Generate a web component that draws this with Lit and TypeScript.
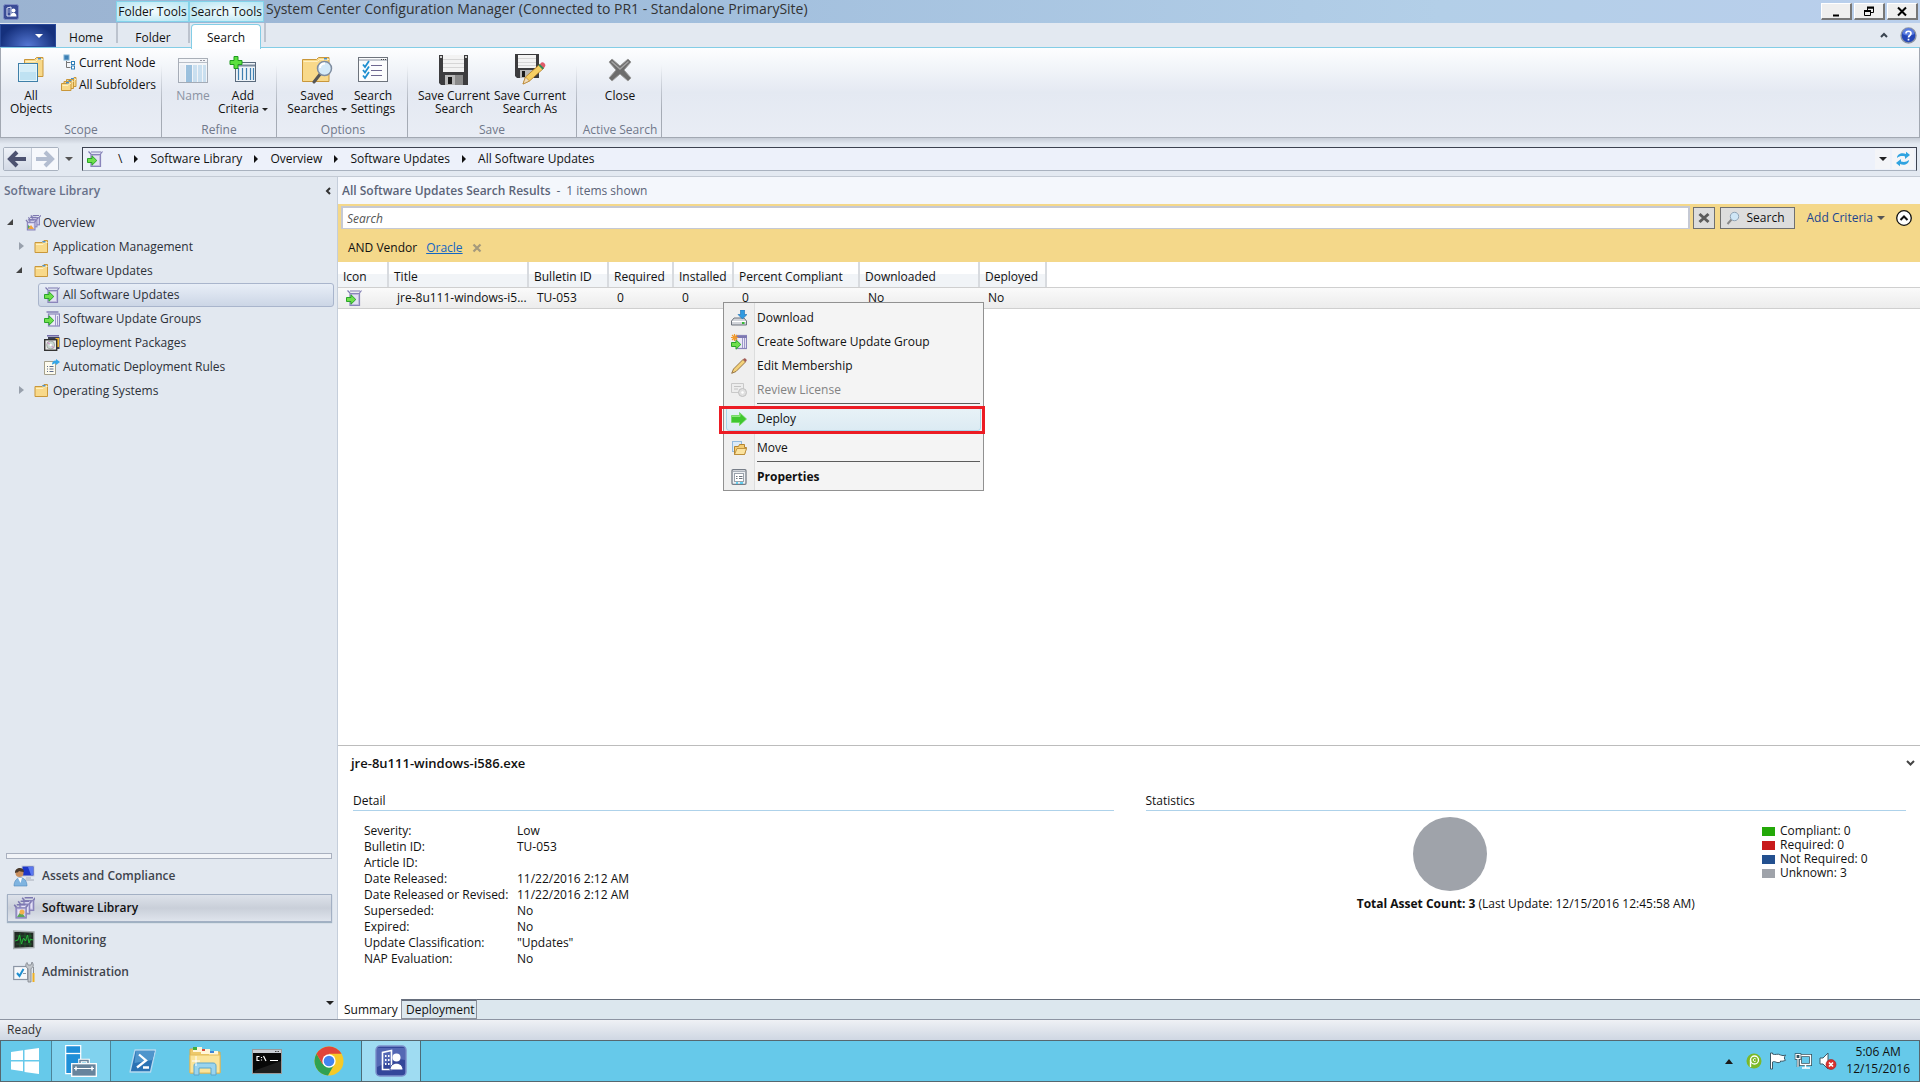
import { LitElement, html, css, svg, nothing, type TemplateResult } from "lit";
import { customElement, property, state } from "lit/decorators.js";
import { classMap } from "lit/directives/class-map.js";

const greenArrow = (x: number, y: number) => svg`
  <path transform="translate(${x} ${y})" d="M.5 3.500h4.500V.8L9.800 5.500 5 10.200V7.500H.5z" fill="#6fe04c" stroke="#2aa52a"/>`;

const folderShape = (x: number, y: number, w: number, h: number) => svg`
  <g transform="translate(${x} ${y})">
    <path d="M.5 ${h - 0.5}V2.500h${w * 0.5}l2-2h${w * 0.5 - 3.5}v${h - 1}z" fill="#f8d98a" stroke="#c9973a"/>
    <path d="M1.500 4.500h${w * 0.5}l2-2h${w * 0.5 - 4.5}" fill="none" stroke="#fff0c0"/>
    <rect x="${w - 6}" y="1" width="3" height="1.500" fill="#4a90d0"/>
  </g>`;

const boxShape = (x: number, y: number, s: number) => svg`
  <g transform="translate(${x} ${y}) scale(${s})">
    <path d="M1 1l2 2.500M12 1l-2 2.500M3 1h7" stroke="#7d78b0" stroke-width="1.300" fill="none"/>
    <rect x="2.500" y="3.500" width="8" height="8" fill="#cdc9ea" stroke="#8a85bb" stroke-width="1.200"/>
    <rect x="4" y="5" width="5" height="5" fill="#e9e6f8"/>
  </g>`;

const ICONS: Record<string, [number, number, TemplateResult]> = {
  app: [16, 16, svg`
    <rect x=".5" y=".5" width="15" height="15" rx="2" fill="#3a4c96" stroke="#7f8dc4"/>
    <path d="M4 12V4l4-1v9z" fill="none" stroke="#dfe5f8"/><path d="M5.500 6h1M5.500 8h1" stroke="#dfe5f8"/>
    <circle cx="10.500" cy="6.500" r="2" fill="#fff"/><path d="M7.500 12.500c0-5 6-5 6 0z" fill="#fff"/>`],
  allObjects: [28, 28, svg`
    ${folderShape(7, 1, 20, 20)}
    <rect x="1.500" y="7.500" width="19" height="18" fill="#bfe2f2" stroke="#3f7fa8"/>
    <rect x="2.500" y="8.500" width="17" height="16" fill="none" stroke="#e4f5fb"/>
    <path d="M3 9h16v7H3z" fill="#d6eef8"/>`],
  node: [14, 16, svg`
    <rect x="1" y="1" width="5" height="5" fill="#3c7fb4" stroke="#7fb2d4"/>
    <path d="M3.500 7v6.500h4M3.500 8.500h4" fill="none" stroke="#777"/>
    <rect x="8.500" y="7.500" width="3" height="3" fill="#fff" stroke="#2f7fb8"/>
    <rect x="8.500" y="12" width="3" height="3" fill="#fff" stroke="#2f7fb8"/>`],
  subfolders: [16, 16, svg`${folderShape(5, 1, 11, 10)}${folderShape(2.5, 3, 11, 10)}${folderShape(0, 5, 11, 10)}`],
  name: [32, 28, svg`
    <g opacity=".65"><rect x="1.500" y="2.500" width="29" height="24" fill="#f4f6f9" stroke="#808895"/>
    <path d="M2 6.500h28" stroke="#9aa2ae"/><path d="M23 4.500h2M26 4.500h2" stroke="#667"/>
    <rect x="9" y="9" width="6" height="17" fill="#6fa6d0"/><rect x="16" y="9" width="4" height="17" fill="#b7d6ec"/>
    <rect x="21" y="9" width="4" height="17" fill="#b7d6ec"/><rect x="26" y="9" width="3" height="17" fill="#b7d6ec"/>
    <rect x="3" y="9" width="5" height="17" fill="#e6ebf2"/></g>`],
  addCriteria: [28, 28, svg`
    <rect x="6.500" y="6.500" width="20" height="19" fill="#eef3f8" stroke="#5a6a7c"/>
    <path d="M7 9.500h19" stroke="#7a8a9c" stroke-width="2"/>
    <path d="M9.500 12v12M13.500 12v12M17.500 12v12M21.500 12v12M24.500 12v12" stroke="#3f7fb0" stroke-width="1.200"/>
    <path d="M5 .5h4v4h4v4H9v4H5v-4H1v-4h4z" fill="#5be03f" stroke="#1f9a1f"/>`],
  savedSearches: [32, 28, svg`
    ${folderShape(1, 1, 28, 25)}
    <path d="M20 17l-7 9" stroke="#555" stroke-width="3" stroke-linecap="round"/>
    <circle cx="23.500" cy="12.500" r="7" fill="#d5eaf8" stroke="#7f8da0" stroke-width="1.500"/>
    <path d="M19 12c0-3 2-4.500 5-4.500" stroke="#fff" stroke-width="2" fill="none"/>`],
  searchSettings: [32, 28, svg`
    <rect x="1.500" y="1.500" width="29" height="24" fill="#fbfcfd" stroke="#6d737c"/>
    <path d="M2 4h28" stroke="#c3c8d0" stroke-width="2"/><path d="M24 3.500h1M26 3.500h1M28 3.500h1" stroke="#444"/>
    <path d="M14 9.500h11M14 14.500h11M14 19.500h11" stroke="#6d6790" stroke-width="1.200"/>
    <path d="M6 8.500l2 2.500 4-6M6 14l2 2.500 4-6M6 19.500l2 2.500 4-6" stroke="#1f8fd0" stroke-width="1.800" fill="none"/>`],
  floppy: [32, 32, svg`
    <path d="M1 1h29v30H3l-2-2z" fill="#3c3c3e"/><rect x="5" y="1" width="21" height="17" fill="#f3f3f3"/>
    <path d="M5 5.500h21M5 9.500h21M5 13.500h21" stroke="#d6d6d6"/>
    <path d="M2 3h2M27 3h2" stroke="#fff" stroke-width="1.500"/>
    <rect x="7" y="21" width="18" height="10" fill="#b9b9b9"/><rect x="17" y="21" width="8" height="10" fill="#8a8a8a"/>
    <rect x="10" y="23" width="4" height="7" fill="#1c1c1c"/>`],
  floppyAs: [32, 32, svg`
    <path d="M1 0h24v24H3l-2-2z" fill="#3c3c3e"/><rect x="4" y="1" width="18" height="13" fill="#f3f3f3"/>
    <path d="M4 4.500h18M4 8.500h18M4 11.500h18" stroke="#d6d6d6"/>
    <rect x="6" y="16" width="14" height="8" fill="#b9b9b9"/><rect x="8" y="17" width="3" height="6" fill="#1c1c1c"/>
    <path d="M9 30l2.500-7L26 10l4 4-14.500 13z" fill="#f7cf63" stroke="#b07a22" stroke-width=".8"/>
    <path d="M9 30l2.500-7 4 4z" fill="#f2dcb8" stroke="#b07a22" stroke-width=".6"/>
    <path d="M24.500 11.500l4 4 1.500-1.500-4-4z" fill="#2f8a5c"/><path d="M26 10l1.500-1.500c2-1 5 2 3.500 4L30 14z" fill="#e05a6a"/>`],
  bigX: [26, 26, svg`
    <path d="M2 5l3-3 8 7 8-7 3 3-7 8 7 8-3 3-8-7-8 7-3-3 7-8z" fill="#6d6d6d" stroke="#9b9b9b" stroke-linejoin="round"/>
    <path d="M4.500 4.500l8.500 7.500 8.500-7.500" stroke="#a4a4a4" stroke-width="1.500" fill="none"/>`],
  back: [20, 18, svg`<path d="M10 2L3 9l7 7M3 9h16" fill="none" stroke="#4c5270" stroke-width="4"/>`],
  forward: [20, 18, svg`<path d="M10 2l7 7-7 7M17 9H1" fill="none" stroke="#b3bdd0" stroke-width="4"/>`],
  update: [16, 16, svg`
    <path d="M1.500 .5L4 3M15.500 .5L13.500 3M4 1h10" stroke="#7d78b0" stroke-width="1.200" fill="none"/>
    <rect x="4" y="3.500" width="9.500" height="12" fill="#c6c2e2" stroke="#8a85bb" stroke-width="1.200"/>
    <rect x="6" y="5" width="6" height="9" fill="#e2e0f3"/>${greenArrow(0, 4)}`],
  updateGroup: [16, 16, svg`
    <path d="M2.500 1h12" stroke="#7d78b0" stroke-width="1.400"/>
    <rect x="4.500" y="3" width="11" height="12" fill="#eceaf7" stroke="#8a85bb" stroke-width="1.200"/>
    <path d="M11.500 3v12M13.500 5v10" stroke="#9d98ca"/>${greenArrow(0, 4)}`],
  newGroup: [16, 16, svg`
    <rect x="5.500" y="1.500" width="10" height="13" fill="#eceaf7" stroke="#8a85bb" stroke-width="1.200"/>
    <path d="M5 3h11" stroke="#7d78b0" stroke-width="2"/><path d="M11.500 4v10M13.500 4v10" stroke="#9d98ca"/>${greenArrow(0, 5)}
    <path d="M3.500 0v7M0 3.500h7M1 1l5 5M6 1l-5 5" stroke="#f29a2a" stroke-width="1.200"/>`],
  library: [16, 16, svg`${boxShape(5, -0.5, 0.9)}${boxShape(2.5, 1.5, 0.9)}${boxShape(0, 4, 0.95)}
    <path d="M3 14l3-4 3 4z" fill="#f2a33c"/><path d="M3 10l2 1.500L3 14z" fill="#52a552"/>`],
  libraryBig: [22, 22, svg`${boxShape(8, -0.5, 1.2)}${boxShape(4, 3, 1.2)}${boxShape(0, 6.5, 1.25)}
    <path d="M4 20l4-6 4 6z" fill="#5aa65a"/><circle cx="9" cy="15" r="2.500" fill="#f2b04c"/>`],
  folder: [16, 14, folderShape(0.5, 0, 14, 13)],
  packages: [16, 16, svg`
    <path d="M3 .8h12" stroke="#6d67a5" stroke-width="1.500"/><rect x="4" y="2" width="11.500" height="12" fill="#3b3f55"/>
    <rect x="11.500" y="3" width="3.500" height="9" fill="#f0b62e"/><rect x=".7" y="4.700" width="12" height="10.600" fill="#e8e8e8" stroke="#333" stroke-width="1.400"/>
    <circle cx="6.700" cy="10" r="4" fill="#c9d8d2" stroke="#888" stroke-width=".6"/><path d="M6.700 10L3.500 7.500M6.700 10l3 3" stroke="#d67fc8"/><circle cx="6.700" cy="10" r="1.200" fill="#fff"/>`],
  rules: [16, 16, svg`
    <path d="M.5 2.500h11v13H.5z" fill="#fdfbee" stroke="#a5a08c"/><path d="M3 7.500h1M3 10h1M3 12.500h1M5.500 7.500h4M5.500 10h4M5.500 12.500h4" stroke="#5d6a8c"/>
    <path d="M8 6c0-3 1-4.500 4-4.500V0l4 3-4 3V4.500C10 4.500 9 5 8 6z" fill="#35a6e8"/>`],
  assets: [22, 22, svg`
    <rect x="9" y="1" width="12" height="10" fill="#1d36c8" stroke="#c5cbd6"/><path d="M15 2h5v8h-2z" fill="#5a78f0"/>
    <path d="M13 12h5v2h3v2h-9z" fill="#c4cad4"/>
    <circle cx="6.500" cy="8" r="4" fill="#c98f5e"/><path d="M2 8c-.5-6 9-7 9-1-3 0-4-1-5-1-1 2-2 1-4 2z" fill="#4a3a2c"/>
    <path d="M1 21c0-11 13-11 13 0z" fill="#7fb4e0" stroke="#4f88bc" stroke-width=".6"/><path d="M5 13l2.500 5L9 13z" fill="#fff"/>`],
  monitoring: [22, 20, svg`
    <path d="M.7 1L21 2v15.500L.7 18.500z" fill="#222a24" stroke="#a8aeb0" stroke-width="1.400"/>
    <path d="M3 6h16M3 10h16M3 14h16M7 3v14M12 3v14M17 3v14" stroke="#1d6a2c" stroke-width=".7"/>
    <path d="M2 11l3-1 1.500-5 2 9 2-6 2 3 2-6 1.500 8 1.500-4 2.500 1" stroke="#27b83a" fill="none"/>`],
  admin: [22, 22, svg`
    <rect x=".7" y="5.500" width="14" height="13" fill="#f6f8fb" stroke="#8b95a5" stroke-width="1.200"/>
    <path d="M4 12l2.500 3 4-7" stroke="#1f8fd0" stroke-width="2" fill="none"/>
    <path d="M10 12.500h3" stroke="#8b95a5"/>
    <path d="M14 1.500c-2 2-1.500 5 1 6V21h3V7.500c2.500-1 3-4 1-6.500l-1 3h-3z" fill="#c3c7cc" stroke="#7d838b" stroke-width=".8"/>
    <path d="M20.500 6v6" stroke="#8a8f96"/><rect x="19.500" y="12" width="2" height="9" fill="#f0b020"/>`],
  refresh: [16, 16, svg`
    <path d="M2 7c0-4 5-6 9-4V.8L15 4l-5 4V5.500C7 4.500 4.500 5 2 7z" fill="#2fa3e0"/>
    <path d="M14 9c0 4-5 6-9 4v2.200L1 12l5-4v2.500c3 1 5.500.5 8-1.500z" fill="#2fa3e0"/>`],
  help: [17, 17, svg`
    <circle cx="8.500" cy="8.500" r="7.500" fill="#2446b8" stroke="#8c94a5" stroke-width="1.400"/><path d="M2.500 7a6 6 0 0112 0c-4 2-8 2-12 0z" fill="#5a7ce0"/>
    <path d="M6 6.500c0-3 5-3 5 0 0 2-2.500 2-2.500 4M8.500 11.800v1.700" stroke="#fff" stroke-width="1.700" fill="none"/>`],
  smallX: [12, 12, svg`<path d="M1.500 2l9 8M10.500 2l-9 8" stroke="#5c5c5c" stroke-width="3"/>`],
  removeX: [10, 10, svg`<path d="M1.500 1.500l7 7M8.500 1.500l-7 7" stroke="#a59a7c" stroke-width="2.200"/>`],
  magnifier: [14, 14, svg`<path d="M5.500 8.500L1.500 13" stroke="#888" stroke-width="2"/><circle cx="8.500" cy="5.500" r="4.200" fill="#cfe6f6" stroke="#8fa3b5"/>`],
  collapse: [18, 18, svg`<circle cx="9" cy="9" r="7.300" fill="#fff" stroke="#111" stroke-width="1.300"/><path d="M5.500 11L9 7.500l3.500 3.500" stroke="#111" stroke-width="2" fill="none"/>`],
  download: [16, 16, svg`
    <path d="M3 8h10l2.500 3v4H.5v-4z" fill="#d2d5da" stroke="#6f757e"/><path d="M1 11.500h14" stroke="#fff"/><rect x="11" y="12" width="2.500" height="2" fill="#35b835"/>
    <path d="M9.500 0h4v4.500H16L11.500 9 7 4.500h2.500z" fill="#2f9ae0" stroke="#1b6cae" stroke-width=".6"/>`],
  pencil: [16, 16, svg`
    <path d="M.7 15.300L2.500 11 12 1.500l2.500 2.500L5 13.500z" fill="#f4d27a" stroke="#8d6a3a" stroke-width=".9"/><path d="M12 1.500l1-1c1.200-.8 3.200 1.200 2.500 2.500l-1 1z" fill="#a35a55"/>`],
  license: [16, 16, svg`
    <path d="M.5 1.500h12v9H.5z" fill="#ededed" stroke="#c9c9c9"/><path d="M3 4.500h7M3 7h4" stroke="#c4c4c4"/>
    <circle cx="11.500" cy="10.500" r="4" fill="#e0e0e0" stroke="#c0c0c0"/><circle cx="11.500" cy="10.500" r="1.200" fill="#fff"/>`],
  deploy: [16, 14, svg`<path d="M.5 3.500h8V.5L15.500 7l-7 6.500v-3h-8z" fill="#3fc72f" stroke="#6fd860" stroke-width=".8"/><path d="M1 4.500h8V2" stroke="#8be87c" fill="none"/>`],
  move: [16, 16, svg`
    <path d="M1.500 1.500h9v10h-9z" fill="#dcebf8" stroke="#3f86c8" stroke-dasharray="1 1"/>
    <path d="M3.500 14.500v-8h4l1-2h5v3h2l-2 7z" fill="#f4cd74" stroke="#b58530"/><path d="M3.500 14.500l2.500-6h9.500l-2 6z" fill="#fbe3a0" stroke="#b58530" stroke-width=".8"/>`],
  props: [16, 16, svg`
    <rect x="1" y=".7" width="14" height="14.600" rx="1" fill="#eef1f4" stroke="#767d87" stroke-width="1.300"/><path d="M2 2.500h12" stroke="#aab1ba"/>
    <rect x="3.500" y="4.500" width="9" height="8" fill="#fff" stroke="#9aa2ac"/><path d="M5 7.500h1.500M5 9.500h1.500M8 7.500h3.500M8 9.500h3.500" stroke="#6c747f"/><path d="M5 14h2M9 14h3" stroke="#3cc8f0" stroke-width="1.500"/>`],
  start: [28, 26, svg`<path d="M0 4l12-1.700V12H0zM13.500 2.100L28 0v12H13.500zM0 13.500h12v9.700L0 21.500zM13.500 13.500H28v12.500l-14.500-2.100z" fill="#fff"/>`],
  server: [32, 32, svg`
    <path d="M.7 .7h15v28h-15z" fill="#1f8fd8" stroke="#fff" stroke-width="1.200"/><path d="M1 8.500h15" stroke="#fff" stroke-width="1.300"/>
    <path d="M15 18v-2.500h8V18" fill="none" stroke="#fff" stroke-width="3.500"/><path d="M15 18v-2.500h8V18" fill="none" stroke="#67849c" stroke-width="1.500"/>
    <rect x="6.700" y="18.700" width="24.600" height="12.600" fill="#67849c" stroke="#fff" stroke-width="1.300"/><path d="M9 23.500h20" stroke="#fff"/><path d="M11 21.500v4M27 21.500v4" stroke="#fff" stroke-width="1.500"/>`],
  powershell: [28, 24, svg`
    <path d="M6 1h20.500L21.500 23H1z" fill="#2b73b4" stroke="#b4d9f0" stroke-width="1.300" stroke-linejoin="round"/><path d="M7 2h18.500l-2 9-18 3z" fill="#4f95cc"/>
    <path d="M10 5.500l7 6-9 7M14 18.500h6" stroke="#fff" stroke-width="2.300" fill="none"/>`],
  explorer: [32, 30, svg`
    <path d="M1 27V3h10l2 3h18v21z" fill="#eec96a" stroke="#d9ac48"/><rect x="4" y="1" width="9" height="5" fill="#fff6d8"/><rect x="4" y="1" width="4" height="3" fill="#3fae3f"/>
    <rect x="12" y="3" width="9" height="5" fill="#fff6d8"/><rect x="13" y="3" width="3" height="2" fill="#d84a3a"/><rect x="20" y="5" width="9" height="4" fill="#fff6d8"/><rect x="21" y="5" width="4" height="2" fill="#3f86d8"/>
    <path d="M1 9h30v18H1z" fill="#fbe49a" stroke="#e2bc5c"/>
    <path d="M5 29v-9c0-2 1-3 3-3h16c2 0 3 1 3 3v9h-5v-7H10v7z" fill="#9ad4ee" stroke="#5aa6cc"/>
    <path d="M7 10v10M3 15h8" stroke="#fff"/>`],
  cmd: [30, 25, svg`
    <rect x=".5" y=".5" width="29" height="24" fill="#080808" stroke="#9a9a9a"/><rect x="1" y="1" width="28" height="3" fill="#c8ccd2"/>
    <path d="M23 2.500h1.500M25.500 2.500h1.500" stroke="#444"/><path d="M4 21L29 12v12H1z" fill="#1e1e1e"/>
    <path d="M7.500 7.500H5v4h2.500M9.500 8v1M9.500 10.500v1M11.500 7l2.500 5M18 11.500h8" stroke="#fff" fill="none" stroke-width="1.200"/>`],
  chrome: [30, 30, svg`
    <circle cx="15" cy="15" r="14.500" fill="#f6c927"/>
    <path d="M2.500 7.700A14.500 14.500 0 0014 29.500L20.500 18 15 15 8.500 18z" fill="#2fa152"/><path d="M2.500 7.700L8.500 18 15 15V7.800h12.500A14.500 14.500 0 002.500 7.700z" fill="#e0453a"/>
    <circle cx="15" cy="15" r="6.700" fill="#fff"/><circle cx="15" cy="15" r="5.300" fill="#4285f0"/>`],
  sccm: [32, 32, svg`
    <rect x="1" y="1" width="30" height="30" rx="4" fill="#34479a" stroke="#7d90cc" stroke-width="1.500"/><path d="M2 3h28v12C20 12 12 18 2 22z" fill="#5468b4"/>
    <path d="M7.500 24.500v-17l9-2v19z" fill="none" stroke="#fff" stroke-width="1.600"/>
    <path d="M10 11h1.500M13 11h1.500M10 15h1.500M13 15h1.500M10 19h1.500M13 19h1.500" stroke="#fff" stroke-width="2"/>
    <circle cx="21.500" cy="12.500" r="4" fill="#fff"/><path d="M15 25c0-9 13-9 13 0z" fill="#fff" stroke="#34479a"/>`],
  trayUp: [8, 5, svg`<path d="M4 0l4 5H0z" fill="#1a1a1a"/>`],
  trayGreen: [16, 16, svg`<circle cx="8" cy="8" r="7.500" fill="#7cb928"/><circle cx="8.500" cy="7" r="4" fill="none" stroke="#fff" stroke-width="1.300"/><path d="M4.500 7v7" stroke="#fff" stroke-width="1.400"/><path d="M9.800 6a1.500 1.500 0 10 0 2" fill="none" stroke="#fff"/>`],
  flag: [18, 18, svg`<path d="M1.500 1v16h2v-7c3-1.500 4 2 8 0V9c2 .5 3 0 5-.7-1.500-1.500-1.500-3 0-5.300-2 1-3 .5-5 0-3-2-5 .5-8-1V1z" fill="#fff" stroke="#3d5a68" stroke-width="1"/>`],
  network: [18, 18, svg`
    <path d="M6.500 3.500h10v9h-10z" fill="#66c9ea" stroke="#31505c" stroke-width="3"/><path d="M6.500 3.500h10v9h-10zM11.500 13v3M8 16h8" fill="none" stroke="#fff" stroke-width="1.400"/>
    <path d="M2 2.500h4v4H2zM4 7v8" fill="#31505c" stroke="#31505c" stroke-width="2.500"/><path d="M2 2.500h4v4H2zM4 7v8" fill="none" stroke="#fff" stroke-width="1.200"/>`],
  volume: [18, 18, svg`
    <path d="M1 6v6h3l5 5V1L4 6z" fill="#fff" stroke="#3d5a68"/>
    <circle cx="12" cy="12.500" r="5" fill="#d8302c" stroke="#a81c1c" stroke-width=".6"/><path d="M10 10.500l4 4M14 10.500l-4 4" stroke="#fff" stroke-width="1.700"/>`],
};

const icon = (name: string) => {
  const [w, h, body] = ICONS[name];
  return html`<svg class="icon" width=${w} height=${h} viewBox="0 0 ${w} ${h}" aria-hidden="true">${body}</svg>`;
};

const shared = css`
  :host, * { box-sizing: border-box; }
  button { font: inherit; color: inherit; background: none; border: 0; padding: 0; margin: 0; text-align: inherit; cursor: default; white-space: nowrap; }
  .icon { display: block; flex: none; }
  .down { display: inline-block; border: 4px solid transparent; border-top: 4px solid #222; border-bottom: 0; }
  .tiny { display: inline-block; border: 3px solid transparent; border-top: 3px solid #222; border-bottom: 0; vertical-align: middle; }
`;

@customElement("window-ribbon")
class WindowRibbon extends LitElement {
  static styles = [shared, css`
    :host { display: block; }
    .title { display: flex; height: 23px; background: linear-gradient(90deg, #9bb3d1, #9fbcdb 30%, #b3cfe8 75%, #bacfec); }
    .badge { width: 116px; padding: 4px 3px; }
    .ctx { width: 73px; margin-top: 1px; height: 21px; border: 1px solid #83d3ea; line-height: 20px; background: radial-gradient(ellipse at center, #f4fcfe, #b4e4f2); white-space: nowrap; display: flex; justify-content: center; }
    .ctx.second { width: 75px; }
    .caption { flex: 1; margin: 0; padding-left: 2px; font-size: 14px; font-weight: 400; line-height: 18px; color: #333; white-space: nowrap; overflow: hidden; }
    .win { display: flex; gap: 2px; padding: 3px 2px 3px 0; }
    .win button { width: 31px; height: 17px; background: #efefef; border: 1px solid #fff; border-right: 2px solid #777; border-bottom: 2px solid #777; display: grid; place-items: center; }
    .tabs { display: flex; height: 24px; background: #e3e9f1; line-height: 29px; }
    .file { width: 56px; margin-top: 1px; border: 1px solid #2a4a9a; background: radial-gradient(ellipse at 50% 100%, #5578d4, #15307c 75%); padding-right: 12px; display: flex; align-items: center; justify-content: flex-end; }
    .file .down { border-top-color: #fff; }
    .tab { text-align: center; width: 60px; }
    .tab.wide { width: 74px; border-left: 2px solid; border-right: 2px solid; border-image: linear-gradient(#bcc3ce 80%, transparent 80%) 1; }
    .tab.on { width: 70px; margin: 1px 3px 0 1px; height: 25px; position: relative; background: #fff; border: 1px solid #83cde6; border-bottom: 0; border-radius: 4px 4px 0 0; line-height: 26px; }
    .bar { width: 2px; height: 19px; background: #bcc3ce; }
    .right { margin-left: auto; display: flex; align-items: center; gap: 12px; padding-right: 3px; }
    .body { display: flex; height: 91px; border: 1px solid #a2a8b2; border-top-color: #83cde6; background: linear-gradient(#fdfeff, #e4e9f2 50%, #e9edf5); }
    .group { display: flex; flex-direction: column; border-right: 1px solid; border-image: linear-gradient(transparent 20%, #a5abb5 70%) 1; padding: 3px 0 0 2px; line-height: 13px; }
    .row { display: flex; flex: 1; justify-content: center; }
    .label { text-align: center; color: #70788a; line-height: 15px; }
    .big { display: flex; flex-direction: column; align-items: center; text-align: center; }
    .pic { height: 38px; display: grid; place-items: center; }
    .off { color: #8b93a2; }
    .small { display: flex; flex-direction: column; flex: 1; }
    .small button { display: flex; align-items: center; gap: 2px; height: 22px; }
    .small button:first-child { padding-left: 2px; }
    .scope { width: 161px; padding-left: 0; } .refine { width: 115px; padding-left: 0; } .options { width: 131px; } .save { width: 169px; padding-left: 0; } .active { width: 85px; }
    .w48 { width: 48px; } .w52 { width: 52px; } .w60 { width: 60px; } .w76 { width: 76px; }
  `];
  private big(name: string, top: string, bottom: TemplateResult | string, width: string, off = false) {
    return html`<button class="big ${width} ${off ? "off" : ""}" ?disabled=${off}><span class="pic">${icon(name)}</span><span>${top}</span><span>${bottom}</span></button>`;
  }
  render() {
    const arrow = html` <i class="tiny"></i>`;
    return html`
      <header class="title">
        <div class="badge">${icon("app")}</div>
        <div class="ctx">Folder Tools</div><div class="ctx second">Search Tools</div>
        <h1 class="caption">System Center Configuration Manager (Connected to PR1 - Standalone PrimarySite)</h1>
        <div class="win">
          <button aria-label="Minimize"><svg width="12" height="11"><path d="M3 9.500h6" stroke="#000" stroke-width="2"/></svg></button>
          <button aria-label="Restore"><svg width="12" height="11"><path d="M4.500 4V2h6v4.500H8M1.500 5h6v4.500h-6z" fill="none" stroke="#000"/><path d="M4 1.500h7M1 5h7" stroke="#000" stroke-width="2"/></svg></button>
          <button aria-label="Close window"><svg width="12" height="11"><path d="M2 1.500l8 8M10 1.500l-8 8" stroke="#000" stroke-width="2"/></svg></button>
        </div>
      </header>
      <nav class="tabs">
        <button class="file" aria-label="File"><i class="down"></i></button>
        <button class="tab">Home</button><button class="tab wide">Folder</button><button class="tab on">Search</button><span class="bar"></span>
        <div class="right">
          <button aria-label="Collapse ribbon"><svg class="icon" width="8" height="6"><path d="M1 5l3-3 3 3" fill="none" stroke="#3a4450" stroke-width="2"/></svg></button>
          <button aria-label="Help">${icon("help")}</button>
        </div>
      </nav>
      <div class="body">
        <div class="group scope"><div class="row">
          ${this.big("allObjects", "All", "Objects", "w60")}
          <div class="small"><button>${icon("node")}Current Node</button><button>${icon("subfolders")}All Subfolders</button></div>
        </div><div class="label">Scope</div></div>
        <div class="group refine"><div class="row">${this.big("name", "Name", "", "w48", true)}${this.big("addCriteria", "Add", html`Criteria${arrow}`, "w52")}</div><div class="label">Refine</div></div>
        <div class="group options"><div class="row">${this.big("savedSearches", "Saved", html`Searches${arrow}`, "w60")}${this.big("searchSettings", "Search", "Settings", "w52")}</div><div class="label">Options</div></div>
        <div class="group save"><div class="row">${this.big("floppy", "Save Current", "Search", "w76")}${this.big("floppyAs", "Save Current", "Search As", "w76")}</div><div class="label">Save</div></div>
        <div class="group active"><div class="row">${this.big("bigX", "Close", "", "w60")}</div><div class="label">Active Search</div></div>
      </div>`;
  }
}

@customElement("address-bar")
class AddressBar extends LitElement {
  static styles = [shared, css`
    :host { display: flex; height: 39px; padding: 9px 3px 5px; background: linear-gradient(#c6ccd6, #e3e9f1 6px); border-bottom: 1px solid #c3cad4; }
    .nav { display: flex; border: 1px solid #a9b2bf; border-radius: 2px; width: 56px; }
    .nav button { flex: 1; display: grid; place-items: center; background: linear-gradient(#eef2f8, #d3dae6); }
    .nav button:last-child { background: #f6f8fc; border-left: 1px solid #c5ccd8; }
    .hist { width: 23px; padding-left: 6px; display: flex; align-items: center; }
    .hist .down { border-top-color: #555; }
    .box { flex: 1; display: flex; align-items: center; background: #edf1fa; border: 1px solid #3c4250; border-bottom-color: #a9b2bf; padding: 0 2px 0 4px; }
    ol { display: flex; flex: 1; list-style: none; margin: 0; padding: 0 0 0 15px; line-height: 22px; }
    li { display: flex; align-items: center; }
    li + li::before { content: ""; border: 4px solid transparent; border-left-color: #111; border-right: 0; margin: 0 12px; }
    a { color: #111; text-decoration: none; }
    .end { height: 20px; width: 15px; background: #f4f5f8; margin-left: 2px; display: grid; place-items: center; }
    .end.wide { width: 22px; }
  `];
  render() {
    const path = ["\\", "Software Library", "Overview", "Software Updates", "All Software Updates"];
    return html`
      <div class="nav"><button aria-label="Back">${icon("back")}</button><button aria-label="Forward">${icon("forward")}</button></div>
      <button class="hist" aria-label="History"><i class="down"></i></button>
      <div class="box">${icon("update")}<ol>${path.map((p) => html`<li><a href="#">${p}</a></li>`)}</ol>
        <button class="end" aria-label="Locations"><i class="down"></i></button>
        <button class="end wide" aria-label="Refresh">${icon("refresh")}</button>
      </div>`;
  }
}

interface TreeNode { label: string; icon: string; depth: number; open?: boolean; }

@customElement("side-panel")
class SidePanel extends LitElement {
  @state() private selected = "All Software Updates";
  static styles = [shared, css`
    :host { display: flex; flex-direction: column; background: #e2e8f0; border-right: 1px solid #c5cedb; color: #2c3038; }
    h2 { margin: 0; padding: 0 6px 0 4px; font-size: 12px; font-weight: 600; color: #68718a; line-height: 28px; height: 34px; display: flex; justify-content: space-between; align-items: flex-start; }
    h2 button { padding-top: 10px; height: 18px; line-height: 8px; }
    ul { list-style: none; margin: 0; padding: 0 3px 0 0; }
    li { display: flex; height: 24px; align-items: center; }
    .d1 { padding-left: 7px; } .d2 { padding-left: 16px; } .d3 { padding-left: 38px; }
    .twist { width: 17px; flex: none; display: flex; padding-bottom: 3px; }
    .shut { border: 4px solid transparent; border-left: 5px solid #98a0ac; border-right: 0; margin-left: 3px; }
    .open { width: 0; height: 0; border-bottom: 6px solid #444; border-left: 6px solid transparent; }
    .node { display: flex; align-items: center; gap: 3px; height: 24px; flex: 1; border: 1px solid transparent; border-radius: 3px; }
    .d1 .node { gap: 2px; }
    .d3 .node { padding-left: 5px; }
    .node.on { border-color: #a9b5cc; background: linear-gradient(#e8eef7, #ccd6e6); }
    .split { height: 6px; border: 1px solid #a9b0bf; background: #f2f4f8; margin: auto 5px 0 6px; }
    .spaces { display: flex; flex-direction: column; padding: 3px 5px 0 7px; gap: 4px; }
    .space { display: flex; align-items: center; gap: 7px; height: 28px; padding-left: 5px; border: 1px solid transparent; font-weight: 600; color: #3d434c; }
    .space.on { border-color: #a3b0c4; background: linear-gradient(#dde2ea, #c9cfd9 50%, #dfe4ec); box-shadow: 0 1px 1px #9fb1c2; color: #111; }
    .more { align-self: flex-end; padding: 0 3px 0 0; height: 33px; display: flex; align-items: center; }
  `];
  private nodes: TreeNode[] = [
    { label: "Overview", icon: "library", depth: 1, open: true },
    { label: "Application Management", icon: "folder", depth: 2, open: false },
    { label: "Software Updates", icon: "folder", depth: 2, open: true },
    { label: "All Software Updates", icon: "update", depth: 3 },
    { label: "Software Update Groups", icon: "updateGroup", depth: 3 },
    { label: "Deployment Packages", icon: "packages", depth: 3 },
    { label: "Automatic Deployment Rules", icon: "rules", depth: 3 },
    { label: "Operating Systems", icon: "folder", depth: 2, open: false },
  ];
  private spaces = [["Assets and Compliance", "assets"], ["Software Library", "libraryBig"], ["Monitoring", "monitoring"], ["Administration", "admin"]];
  render() {
    return html`
      <h2>Software Library<button aria-label="Collapse pane"><svg width="6" height="8"><path d="M5 1L2 4l3 3" fill="none" stroke="#333" stroke-width="2"/></svg></button></h2>
      <ul>${this.nodes.map((n) => html`<li class="d${n.depth}">
        ${n.open === undefined ? nothing : html`<span class="twist"><i class=${n.open ? "open" : "shut"}></i></span>`}
        <button class=${classMap({ node: true, on: n.label === this.selected })} @click=${() => (this.selected = n.label)}>${icon(n.icon)}${n.label}</button></li>`)}</ul>
      <div class="split"></div>
      <div class="spaces">${this.spaces.map(([label, ic]) => html`<button class=${classMap({ space: true, on: label === "Software Library" })}>${icon(ic)}${label}</button>`)}</div>
      <button class="more" aria-label="More"><i class="down"></i></button>`;
  }
}

@customElement("context-menu")
class ContextMenu extends LitElement {
  static styles = [shared, css`
    :host { display: block; width: 261px; padding: 3px 2px 1px; border: 1px solid #919191; background: linear-gradient(90deg, #efefef 30px, #dcdddd 30px, #dcdddd 31px, #f4f4f4 31px); color: #111; }
    .item { display: flex; align-items: center; width: 100%; height: 24px; padding-left: 5px; gap: 10px; }
    .slot { width: 16px; }
    .item:disabled { color: #838383; }
    .strong { font-weight: 700; }
    .sep { border: 0; border-top: 1px solid #5c5c5c; margin: 1px 1px 3px 31px; }
    .hot { position: relative; margin-bottom: 5px; }
    .hot .item { border: 1px solid #a8d8eb; border-radius: 3px; background: linear-gradient(#e8f2f7, #dcebf3); padding-left: 4px; }
    .mark { position: absolute; inset: -1px -4px -3px -7px; border: 3px solid #ec1c24; pointer-events: none; }
  `];
  private item(name: string, label: string, opts: { off?: boolean; strong?: boolean } = {}) {
    return html`<button role="menuitem" class=${classMap({ item: true, strong: !!opts.strong })} ?disabled=${!!opts.off}><span class="slot">${icon(name)}</span>${label}</button>`;
  }
  render() {
    return html`
      ${this.item("download", "Download")}${this.item("newGroup", "Create Software Update Group")}
      ${this.item("pencil", "Edit Membership")}${this.item("license", "Review License", { off: true })}
      <hr class="sep">
      <div class="hot">${this.item("deploy", "Deploy")}<span class="mark"></span></div>
      ${this.item("move", "Move")}
      <hr class="sep">
      ${this.item("props", "Properties", { strong: true })}`;
  }
}

@customElement("results-pane")
class ResultsPane extends LitElement {
  static styles = [shared, css`
    :host { display: flex; flex-direction: column; position: relative; min-height: 0; background: #fff; }
    h2 { margin: 0; padding-left: 4px; height: 27px; line-height: 28px; background: #f4f7fc; font-size: 12px; font-weight: 400; color: #5b6478; }
    h2 b { font-weight: 600; margin-right: 6px; } h2 span { margin-left: 6px; }
    .search { background: #f4d88a; height: 58px; }
    .line { display: flex; align-items: center; padding: 2px 7px 0 3px; }
    input { flex: 1; min-width: 0; height: 23px; font: inherit; border: 2px solid #c5c9d4; border-bottom-width: 1px; padding: 0 4px; background: #fff; outline: 0; }
    input::placeholder { font-style: italic; color: #555; opacity: 1; }
    .clear, .go { height: 22px; border: 1px solid #707070; background: #dddddd; display: flex; align-items: center; }
    .clear { width: 22px; justify-content: center; margin: 0 5px 0 3px; }
    .go { width: 75px; padding-left: 5px; gap: 7px; }
    .add { color: #1c4590; margin: 0 10px 0 12px; display: flex; align-items: center; gap: 4px; }
    .add .down { border-top-color: #555; }
    .crit { display: flex; align-items: center; gap: 9px; padding: 8px 0 0 10px; line-height: 22px; color: #111; }
    .crit a { color: #1266c4; }
    .grid { position: relative; flex: 1; min-height: 0; }
    table { width: 100%; table-layout: fixed; border-collapse: separate; border-spacing: 0; }
    th { height: 25px; padding: 4px 0 0 5px; text-align: left; font-weight: 400; border-right: 2px solid #d8dbdf; background: linear-gradient(#fff 50%, #f1f4f7 50%); white-space: nowrap; }
    th:last-child { background: #fff; border-right: 0; }
    td { height: 22px; padding: 0 0 0 8px; border-top: 1px solid #cfcfcf; border-bottom: 1px solid #cfcfcf; background: linear-gradient(#fafafa, #ececec); white-space: nowrap; }
    .ico { width: 51px; } .ttl { width: 140px; } .bul { width: 80px; } .req { width: 65px; } .ins { width: 60px; } .pct { width: 126px; } .dwn { width: 120px; } .dep { width: 67px; }
    context-menu { position: absolute; left: 385px; top: 40px; z-index: 2; }
  `];
  render() {
    const cols = [["ico", "Icon"], ["ttl", "Title"], ["bul", "Bulletin ID"], ["req", "Required"], ["ins", "Installed"], ["pct", "Percent Compliant"], ["dwn", "Downloaded"], ["dep", "Deployed"], ["", ""]];
    const row = ["jre-8u111-windows-i5...", "TU-053", "0", "0", "0", "No", "No", ""];
    return html`
      <h2><b>All Software Updates Search Results</b>-<span>1 items shown</span></h2>
      <div class="search">
        <div class="line">
          <input type="text" placeholder="Search" aria-label="Search">
          <button class="clear" aria-label="Clear">${icon("smallX")}</button>
          <button class="go">${icon("magnifier")}Search</button>
          <button class="add">Add Criteria<i class="down"></i></button>
          <button aria-label="Collapse search">${icon("collapse")}</button>
        </div>
        <div class="crit"><span>AND Vendor</span><a href="#">Oracle</a><button aria-label="Remove criterion">${icon("removeX")}</button></div>
      </div>
      <div class="grid">
        <table>
          <thead><tr>${cols.map(([c, l]) => html`<th class=${c}>${l}</th>`)}</tr></thead>
          <tbody><tr><td>${icon("update")}</td>${row.map((v) => html`<td>${v}</td>`)}</tr></tbody>
        </table>
        <context-menu role="menu"></context-menu>
      </div>`;
  }
}

@customElement("detail-pane")
class DetailPane extends LitElement {
  @property({ type: String }) name = "";
  static styles = [shared, css`
    :host { display: flex; flex-direction: column; height: 274px; background: #fff; border-top: 1px solid #bcbcbc; color: #111; }
    h2 { margin: 0; padding: 0 5px 0 13px; height: 34px; font-size: 13px; font-weight: 600; line-height: 34px; display: flex; justify-content: space-between; align-items: center; }
    .cols { flex: 1; display: grid; grid-template-columns: 1fr 1fr; gap: 32px; padding: 12px 14px 0 15px; }
    h3 { margin: 0; font-size: 12px; font-weight: 400; line-height: 18px; border-bottom: 1px solid #aed2ea; }
    dl { display: grid; grid-template-columns: 153px 1fr; margin: 0; padding: 12px 0 0 11px; line-height: 16px; }
    dd { margin: 0; }
    .stats { display: grid; grid-template-columns: 1fr 152px; padding-top: 6px; }
    figure { margin: 0; display: flex; flex-direction: column; align-items: center; }
    .pie { width: 74px; height: 74px; border-radius: 50%; background: #9fa3aa; }
    .total { margin: 4px 0 0; line-height: 18px; grid-column: 1 / -1; text-align: center; }
    .legend { list-style: none; margin: 0; padding: 7px 0 0 8px; line-height: 14px; }
    .legend li { display: flex; align-items: center; gap: 5px; }
    .sw { width: 13px; height: 9px; } .ok { background: #23a808; } .req { background: #c81a1c; } .not { background: #23508f; } .unk { background: #9fa3aa; }
    .tabs { display: flex; height: 20px; line-height: 18px; }
    .tabs button { padding: 1px 6px 0; width: 63px; }
    .tabs .off { width: 76px; padding: 0 4px; background: #dce7ee; border: 1px solid #8b909a; border-top: 2px solid #666e7c; }
    .fill { flex: 1; background: #dce7ee; border-top: 1px solid #626a78; }
  `];
  private rows = [["Severity:", "Low"], ["Bulletin ID:", "TU-053"], ["Article ID:", ""], ["Date Released:", "11/22/2016 2:12 AM"], ["Date Released or Revised:", "11/22/2016 2:12 AM"], ["Superseded:", "No"], ["Expired:", "No"], ["Update Classification:", "\"Updates\""], ["NAP Evaluation:", "No"]];
  private legend = [["ok", "Compliant: 0"], ["req", "Required: 0"], ["not", "Not Required: 0"], ["unk", "Unknown: 3"]];
  render() {
    return html`
      <h2>${this.name}<button aria-label="Collapse details"><svg class="icon" width="9" height="8"><path d="M1 2l3.500 3.500L8 2" fill="none" stroke="#444" stroke-width="2"/></svg></button></h2>
      <div class="cols">
        <section><h3>Detail</h3><dl>${this.rows.map(([k, v]) => html`<dt>${k}</dt><dd>${v}</dd>`)}</dl></section>
        <section><h3>Statistics</h3>
          <div class="stats">
            <figure><div class="pie"></div></figure>
            <ul class="legend">${this.legend.map(([c, l]) => html`<li><i class="sw ${c}"></i>${l}</li>`)}</ul>
            <p class="total"><b>Total Asset Count: 3</b> (Last Update: 12/15/2016 12:45:58 AM)</p>
          </div>
        </section>
      </div>
      <div class="tabs"><button>Summary</button><button class="off">Deployment</button><span class="fill"></span></div>`;
  }
}

@customElement("task-bar")
class TaskBar extends LitElement {
  static styles = [shared, css`
    :host { display: flex; height: 42px; background: #66c9ea; border: 1px solid #56676f; color: #111; }
    .apps { display: flex; gap: 2px; flex: 1; }
    .apps button { width: 60px; display: grid; place-items: center; }
    .apps .start { width: 48px; }
    .apps .run { background: #80d2ee; border: 1px solid #4c8498; border-width: 0 1px; }
    .apps .on { background: #9fdcf2; border: 1px solid #4c6c78; border-width: 0 1px; }
    .tray { display: flex; align-items: center; gap: 7px; }
    .tray .up { margin-right: 6px; }
    .clock { padding: 0 9px 2px 2px; text-align: center; line-height: 17px; }
  `];
  render() {
    const apps = [["start", "Start", "start"], ["server", "Server Manager", "run"], ["powershell", "PowerShell", ""], ["explorer", "File Explorer", ""], ["cmd", "Command Prompt", ""], ["chrome", "Chrome", ""], ["sccm", "Configuration Manager", "on"]];
    return html`
      <nav class="apps">${apps.map(([ic, label, cls]) => html`<button class=${cls} aria-label=${label}>${icon(ic)}</button>`)}</nav>
      <div class="tray"><button class="up" aria-label="Show hidden icons">${icon("trayUp")}</button>${icon("trayGreen")}${icon("flag")}${icon("network")}${icon("volume")}
        <time class="clock"><div>5:06 AM</div><div>12/15/2016</div></time></div>`;
  }
}

@customElement("app-root")
class AppRoot extends LitElement {
  static styles = [shared, css`
    :host { display: flex; flex-direction: column; min-height: 100vh; font: 12px/16px "Open Sans", "Noto Sans", sans-serif; color: #111; background: #e3e9f1; overflow: hidden; }
    .main { flex: 1; display: grid; grid-template-columns: 338px minmax(0, 1fr); }
    .content { display: flex; flex-direction: column; min-width: 0; }
    results-pane { flex: 1; }
    .status { height: 21px; border-top: 1px solid #8d94a2; padding-left: 7px; line-height: 20px; background: linear-gradient(#eff1f5, #cfd7e3); color: #333; }
  `];
  render() {
    return html`
      <window-ribbon></window-ribbon>
      <address-bar></address-bar>
      <main class="main">
        <side-panel></side-panel>
        <div class="content"><results-pane></results-pane><detail-pane name="jre-8u111-windows-i586.exe"></detail-pane></div>
      </main>
      <footer class="status">Ready</footer>
      <task-bar></task-bar>`;
  }
}
